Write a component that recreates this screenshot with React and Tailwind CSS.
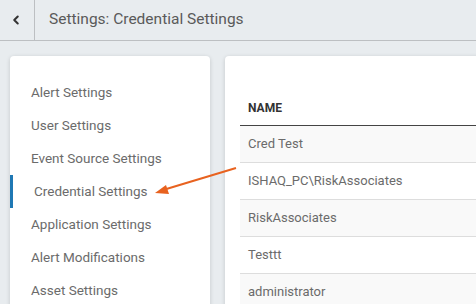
import { ChevronLeft } from "lucide-react";

// ── Settings menu ─────────────────────────────────────────────────────────────

const MENU = [
  "Alert Settings",
  "User Settings",
  "Event Source Settings",
  "Credential Settings",
  "Application Settings",
  "Alert Modifications",
  "Asset Settings",
];

const CREDENTIALS = [
  "Cred Test",
  "ISHAQ_PC\\RiskAssociates",
  "RiskAssociates",
  "Testtt",
  "administrator",
];

function MenuItem({ label, active }) {
  return (
    <li
      className={
        active
          ? "flex h-[33px] items-center border-l-[3px] border-[#1f78b4] pl-[21px] text-[13.5px] text-[#6b6b6b]"
          : "flex h-[33px] items-center pl-[21px] text-[13.5px] text-[#6b6b6b]"
      }
    >
      {label}
    </li>
  );
}

export default function App() {
  return (
    <div
      className="relative h-[304px] w-[476px] overflow-hidden bg-[#e8ecef]"
      style={{ fontFamily: "Roboto, 'Noto Sans', sans-serif" }}
    >
      {/* ── Header ─────────────────────────────────────────────────────────── */}
      <header className="flex h-[41px] items-stretch border-b border-[#bcbfc2]">
        <button
          type="button"
          className="flex w-[35px] items-center justify-center pr-[3px] border-r border-[#bcbfc2] text-[#333]"
        >
          <ChevronLeft size={14} strokeWidth={3.5} />
        </button>
        <h1 className="flex items-center pl-[14px] text-[15.5px] text-[#5a5a5a]">
          Settings: Credential Settings
        </h1>
      </header>

      {/* ── Body ───────────────────────────────────────────────────────────── */}
      <div className="flex gap-[15px] px-[10px] pt-[15px]">
        <nav className="h-[300px] w-[200px] shrink-0 rounded-sm bg-white shadow-[0_1px_4px_rgba(0,0,0,0.16)]">
          <ul className="pt-[20px]">
            {MENU.map((m) => (
              <MenuItem key={m} label={m} active={m === "Credential Settings"} />
            ))}
          </ul>
        </nav>

        <section className="h-[300px] w-[300px] shrink-0 rounded-sm bg-white px-[15px] pt-[35px] shadow-[0_1px_4px_rgba(0,0,0,0.16)]">
          <table className="w-full border-collapse text-left">
            <thead>
              <tr className="h-[34px] border-b border-[#444]">
                <th className="pl-[8px] align-middle text-[12px] font-bold text-[#333]">
                  NAME
                </th>
              </tr>
            </thead>
            <tbody>
              {CREDENTIALS.map((c, i) => (
                <tr
                  key={c}
                  className={
                    i % 2 === 0
                      ? "h-[37px] border-b border-[#ddd] bg-[#f9f9f9]"
                      : "h-[37px] border-b border-[#ddd] bg-white"
                  }
                >
                  <td className="pl-[8px] text-[13px] text-[#6b6b6b]">{c}</td>
                </tr>
              ))}
            </tbody>
          </table>
        </section>
      </div>

      {/* ── Annotation arrow ───────────────────────────────────────────────── */}
      <svg
        className="pointer-events-none absolute left-0 top-0"
        width="476"
        height="304"
        viewBox="0 0 476 304"
      >
        <line x1="236" y1="168" x2="163" y2="190" stroke="#e8621f" strokeWidth="2" />
        <polygon points="155,193 166,185 169,194" fill="#e8621f" />
      </svg>
    </div>
  );
}
